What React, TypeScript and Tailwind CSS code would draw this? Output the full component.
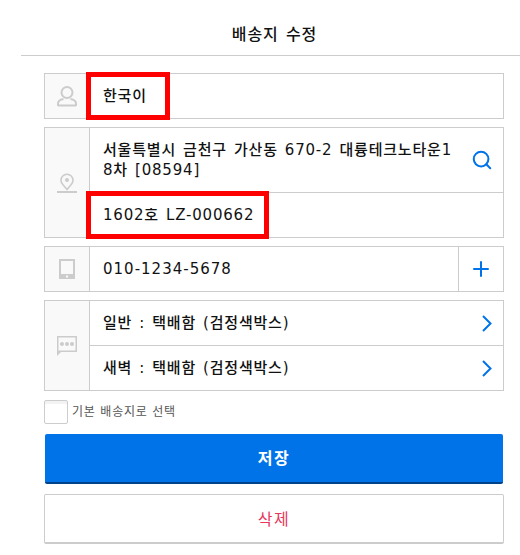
import React from "react";
import { Plus, Search } from "lucide-react";

const font = "font-['DejaVu_Sans','Noto_Sans_CJK_KR',sans-serif]";

function UserIcon() {
  return (
    <svg width="20" height="21" viewBox="0 0 20 21" fill="none" stroke="#ccc" strokeWidth="2">
      <circle cx="10" cy="6.5" r="5.5" />
      <path d="M1 20v-2.5c0-2.5 3-4 5.500-4.500M19 20v-2.500c0-2.500-3-4-5.500-4.500M1 19.500h18" />
    </svg>
  );
}

function PinIcon() {
  return (
    <svg width="20" height="20" viewBox="0 0 20 20" fill="none">
      <path d="M10 16.500L5.800 11.500A6 6 0 1 1 14.200 11.500z" stroke="#ccc" strokeWidth="1.600" />
      <circle cx="10" cy="7" r="2" fill="#ccc" />
      <rect x="0" y="18" width="20" height="2" fill="#ccc" />
    </svg>
  );
}

function TabletIcon() {
  return (
    <svg width="16" height="20" viewBox="0 0 16 20">
      <path fillRule="evenodd" fill="#ccc" d="M0 0h16v20H0zM2 2v13h12V2z" />
      <rect x="7" y="16.500" width="2" height="2" fill="#f9f9f9" />
    </svg>
  );
}

function ChatIcon() {
  return (
    <svg width="20" height="20" viewBox="0 0 20 20">
      <path fillRule="evenodd" fill="#ccc" d="M0 0h20v16H4l-4 4zM1.500 1.500v13h17v-13z" />
      <circle cx="5" cy="8" r="2" fill="#ccc" />
      <circle cx="10" cy="8" r="2" fill="#ccc" />
      <circle cx="15" cy="8" r="2" fill="#ccc" />
    </svg>
  );
}

function IconCell({ children }: { children: React.ReactNode }) {
  return (
    <div className="w-[45px] shrink-0 flex items-center justify-center bg-[#f9f9f9] border-r border-[#ccc]">
      {children}
    </div>
  );
}

function Arrow() {
  return (
    <svg
      width="10"
      height="17"
      viewBox="0 0 10 17"
      fill="none"
      stroke="#0073e9"
      strokeWidth="2"
      className="absolute right-[11px] top-[14px]"
    >
      <path d="M1 1l7.500 7.500L1 16" />
    </svg>
  );
}

export default function App() {
  return (
    <div className={`w-[520px] h-[555px] bg-white overflow-hidden relative ${font}`}>
      <div className="ml-[21px] h-[56px] border-b border-[#ccc] flex items-center justify-center pt-[14px] pl-[8px]">
        <h1 className="text-[16px] font-medium text-[#111] tracking-[1px] [word-spacing:1px] leading-none">배송지 수정</h1>
      </div>

      <div className="w-[460px] ml-[44px] mt-[17px] flex flex-col text-[15px] font-medium text-[#111] tracking-[0.8px] [word-spacing:1.5px]">
        <div className="flex h-[46px] border border-[#ccc]">
          <IconCell>
            <UserIcon />
          </IconCell>
          <div className="flex items-center pl-[13px]">한국이</div>
        </div>

        <div className="flex h-[111px] mt-[8px] border border-[#ccc]">
          <IconCell>
            <PinIcon />
          </IconCell>
          <div className="flex-1 flex flex-col">
            <div className="relative h-[65px] border-b border-[#ccc] pl-[13px] pr-[46px] pt-[12px] leading-[20px] break-all">
              서울특별시 금천구 가산동 670-2 대륭테크노타운18차 [08594]
              <Search className="w-[22px] h-[22px] text-[#0073e9] absolute right-[10px] top-[21px]" strokeWidth={2.2} />
            </div>
            <div className="flex-1 flex items-center pl-[13px]">1602호 LZ-000662</div>
          </div>
        </div>

        <div className="flex h-[46px] mt-[8px] border border-[#ccc]">
          <IconCell>
            <TabletIcon />
          </IconCell>
          <div className="flex-1 flex items-center pl-[13px] pt-[1px] tracking-[1px]">010-1234-5678</div>
          <div className="w-[45px] flex items-center justify-center border-l border-[#ccc]">
            <Plus className="w-[24px] h-[24px] text-[#0073e9]" strokeWidth={2} />
          </div>
        </div>

        <div className="flex h-[91px] mt-[8px] border border-[#ccc]">
          <IconCell>
            <ChatIcon />
          </IconCell>
          <div className="flex-1 flex flex-col">
            <div className="relative h-[45px] border-b border-[#ccc] flex items-center pl-[13px]">
              일반 : 택배함 (검정색박스)
              <Arrow />
            </div>
            <div className="relative flex-1 flex items-center pl-[13px]">
              새벽 : 택배함 (검정색박스)
              <Arrow />
            </div>
          </div>
        </div>

        <label className="flex items-center h-[24px] mt-[9px] text-[12px] font-normal text-[#555] tracking-[0.8px] [word-spacing:0px]">
          <span className="w-[24px] h-[24px] border border-[#ccc] rounded-[2px] bg-white shadow-[inset_0_3px_0_#f3f3f3]" />
          <span className="ml-[4px]">기본 배송지로 선택</span>
        </label>

        <button className="mt-[10px] mx-[1px] h-[50px] pt-[2px] rounded-[2px] bg-[#0073e9] border-b-2 border-[#00438a] text-white text-[16px] font-bold tracking-[1.5px]">
          저장
        </button>
        <button className="mt-[10px] h-[50px] pt-[3px] rounded-[2px] bg-white border border-[#ccc] border-b-2 text-[#e8365d] text-[16px] font-normal tracking-[1.5px]">
          삭제
        </button>
      </div>

      {/* red marks drawn over the screenshot */}
      <div className="absolute left-[86px] top-[72px] w-[84px] h-[48px] border-[5px] border-[#ff0000]" />
      <div className="absolute left-[86px] top-[191px] w-[183px] h-[48px] border-[5px] border-[#ff0000]" />
    </div>
  );
}
